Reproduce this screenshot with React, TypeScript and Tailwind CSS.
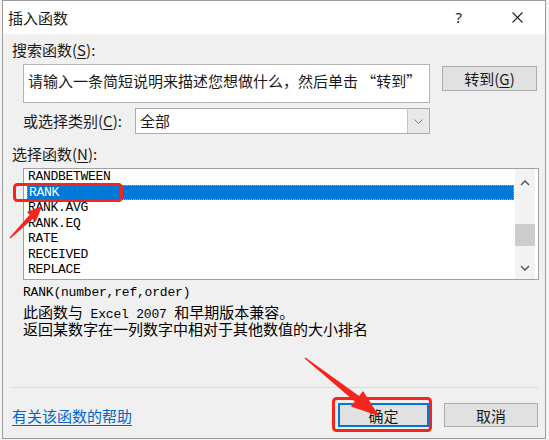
const CJK = "font-['Noto_Sans_CJK_SC','Noto_Sans',sans-serif]"
const MONO = "font-['Liberation_Mono','Noto_Sans_CJK_SC',monospace]"

const functions = ["RANDBETWEEN", "RANK", "RANK.AVG", "RANK.EQ", "RATE", "RECEIVED", "REPLACE"]

// tapered annotation arrow from tail (tx,ty) to tip (px,py)
function arrowPoints(tx: number, ty: number, px: number, py: number, head: number, headW: number, shaftW: number) {
  const dx = px - tx
  const dy = py - ty
  const len = Math.hypot(dx, dy)
  const ux = dx / len
  const uy = dy / len
  const nx = -uy
  const ny = ux
  const bx = px - ux * head
  const by = py - uy * head
  const pts = [
    [tx + nx * 0.6, ty + ny * 0.6],
    [bx + (nx * shaftW) / 2, by + (ny * shaftW) / 2],
    [bx + (nx * headW) / 2, by + (ny * headW) / 2],
    [px, py],
    [bx - (nx * headW) / 2, by - (ny * headW) / 2],
    [bx - (nx * shaftW) / 2, by - (ny * shaftW) / 2],
    [tx - nx * 0.6, ty - ny * 0.6],
  ]
  return pts.map((p) => `${p[0].toFixed(1)},${p[1].toFixed(1)}`).join(" ")
}

function Chevron({ up }: { up?: boolean }) {
  return (
    <svg width="10" height="6" viewBox="0 0 10 6">
      <polyline
        points={up ? "1,5 5,1 9,5" : "1,1 5,5 9,1"}
        fill="none"
        stroke="#5f5f5f"
        strokeWidth="1.6"
      />
    </svg>
  )
}

function Key({ k }: { k: string }) {
  return (
    <>
      (<span className="underline underline-offset-2">{k}</span>)
    </>
  )
}

export default function App() {
  return (
    <div className={`relative w-[549px] h-[440px] overflow-hidden bg-[#f4f4f4] ${CJK} text-[15px] text-[#1a1a1a]`}>
      <div className="ml-[2px] w-[544px] h-[439px] border border-[#9a9a9a] bg-[#f0f0f0] flex flex-col">
        {/* Title bar */}
        <div className="h-[33px] bg-white flex items-center pl-[5px] pr-[22px] leading-none">
          <span className="mt-[-1px]">插入函数</span>
          <span className="ml-auto font-['Noto_Sans',sans-serif] text-[15px] text-[#222]">?</span>
          <svg className="ml-[50px]" width="11" height="11" viewBox="0 0 11 11">
            <path d="M0.5 0.5 L10.5 10.5 M10.5 0.5 L0.5 10.5" stroke="#222" strokeWidth="1.1" />
          </svg>
        </div>

        {/* Body */}
        <div className="flex-1 flex flex-col pl-[9px] pr-[5px] pt-[8px] pb-[11px]">
          <div className="h-[16px] leading-[16px]">
            搜索函数<Key k="S" />:
          </div>

          <div className="mt-[6px] ml-[11px] flex items-start">
            <div className="w-[407px] h-[39px] bg-white border border-[#b4b4b4] pl-[4px] pt-[6px] leading-[20px] whitespace-nowrap">
              请输入一条简短说明来描述您想做什么，然后单击 “转到”
            </div>
            <button className="ml-[12px] mt-[2px] w-[95px] h-[25px] bg-[#e1e1e1] border border-[#adadad] leading-none">
              转到<Key k="G" />
            </button>
          </div>

          <div className="mt-[5px] ml-[11px] flex items-center h-[26px]">
            <span className="w-[112px]">
              或选择类别<Key k="C" />:
            </span>
            <div className="w-[295px] h-[26px] bg-white border border-[#acacac] flex items-center">
              <span className="pl-[4px]">全部</span>
              <div className="ml-auto w-[22px] h-full bg-[#e8e8e8] border-l border-[#c4c4c4] flex items-center justify-center">
                <svg width="9" height="5" viewBox="0 0 9 5">
                  <polyline points="0.5,0.5 4.5,4.5 8.5,0.5" fill="none" stroke="#7a7a7a" strokeWidth="1" />
                </svg>
              </div>
            </div>
          </div>

          <div className="mt-[12px] h-[16px] leading-[16px]">
            选择函数<Key k="N" />:
          </div>

          {/* Function list */}
          <div className="mt-[6px] ml-[11px] w-[516px] h-[112px] bg-white border border-[#a0a0a0] flex pl-[3px] pr-[3px]">
            <div className={`flex-1 mr-[1px] ${MONO} text-[13px] tracking-[-0.3px] text-black`}>
              {functions.map((f) =>
                f === "RANK" ? (
                  <div
                    key={f}
                    className="h-[15.5px] leading-[14px] px-[1px] bg-[#0078d7] text-white border border-dotted border-[#e0a050]"
                  >
                    {f}
                  </div>
                ) : (
                  <div key={f} className="h-[15.5px] leading-[15.5px] px-[1px]">
                    {f}
                  </div>
                )
              )}
            </div>
            <div className="w-[20px] h-full bg-[#f3f3f3] flex flex-col items-stretch">
              <div className="h-[27px] flex items-center justify-center">
                <Chevron up />
              </div>
              <div className="h-[28px]" />
              <div className="h-[22px] bg-[#cdcdcd]" />
              <div className="flex-1" />
              <div className="h-[22px] flex items-center justify-center">
                <Chevron />
              </div>
            </div>
          </div>

          <div className={`mt-[5px] ml-[11px] h-[16px] leading-[16px] ${MONO} text-[13px] tracking-[-0.2px] text-black`}>
            RANK(number,ref,order)
          </div>
          <div className="mt-[2px] ml-[11px] text-black">
            <div className="h-[17px] leading-[17px] whitespace-nowrap">
              此函数与
              <span className={`${MONO} text-[13px] tracking-[-0.2px]`}> Excel 2007 </span>
              和早期版本兼容。
            </div>
            <div className="h-[17px] leading-[17px]">返回某数字在一列数字中相对于其他数值的大小排名</div>
          </div>

          <div className="flex-1" />
          <div className="h-px bg-[#dcdcdc] mr-[2px]" />

          <div className="mt-[15px] flex items-center mr-[2px]">
            <a className="text-[#0066cc] underline underline-offset-[3px] leading-none">有关该函数的帮助</a>
            <button className="ml-auto w-[91px] h-[24px] bg-[#e1e1e1] border-2 border-[#0078d7] leading-none">
              确定
            </button>
            <button className="ml-[15px] w-[94px] h-[24px] bg-[#e1e1e1] border border-[#adadad] leading-none">
              取消
            </button>
          </div>
        </div>
      </div>

      {/* Annotations */}
      <svg className="absolute inset-0 pointer-events-none" width="549" height="440" viewBox="0 0 549 440">
        <rect x="14.5" y="184.5" width="107" height="16" rx="3" fill="none" stroke="#f5251c" strokeWidth="3" />
        <rect x="333.5" y="398.5" width="97" height="32" rx="3" fill="none" stroke="#f5251c" strokeWidth="3" />
        <polygon points={arrowPoints(10, 238, 42, 206, 15, 13, 5)} fill="#f5251c" />
        <polygon points={arrowPoints(305, 358, 379, 416, 28, 20, 7)} fill="#f5251c" />
      </svg>
    </div>
  )
}
